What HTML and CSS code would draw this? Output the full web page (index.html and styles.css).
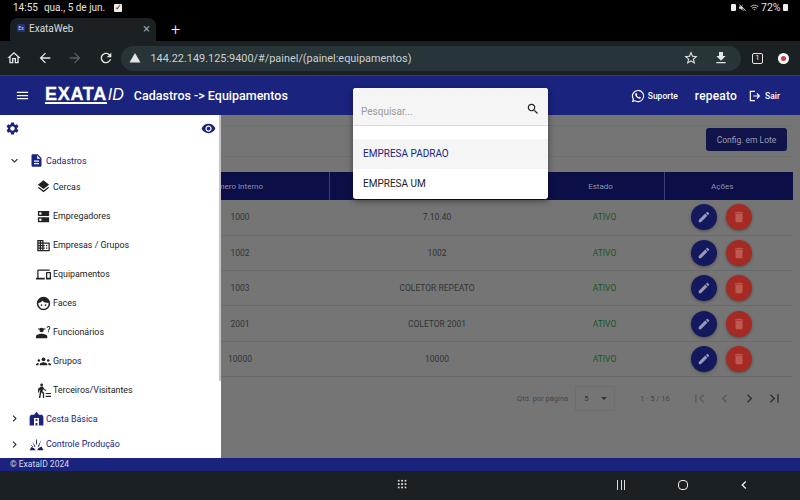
FILE: index.html
```html
<!DOCTYPE html>
<html lang="pt-BR">
<head>
    <meta charset="UTF-8">
    <title>ExataWeb</title>
    <link rel="stylesheet" href="styles.css">
</head>
<body>
    <svg class="sprite">
        <symbol id="i-menu" viewBox="0 0 24 24"><path d="M3 18h18v-2H3v2zm0-5h18v-2H3v2zm0-7v2h18V6H3z"/></symbol>
        <symbol id="i-gear" viewBox="0 0 24 24"><path d="M19.14 12.94c.04-.3.06-.61.06-.94 0-.32-.02-.64-.07-.94l2.03-1.58c.18-.14.23-.41.12-.61l-1.92-3.32c-.12-.22-.37-.29-.59-.22l-2.39.96c-.5-.38-1.03-.7-1.62-.94l-.36-2.54c-.04-.24-.24-.41-.48-.41h-3.84c-.24 0-.43.17-.47.41l-.36 2.54c-.59.24-1.13.57-1.62.94l-2.39-.96c-.22-.08-.47 0-.59.22L2.74 8.87c-.12.21-.08.47.12.61l2.03 1.58c-.05.3-.09.63-.09.94s.02.64.07.94l-2.03 1.58c-.18.14-.23.41-.12.61l1.92 3.32c.12.22.37.29.59.22l2.39-.96c.5.38 1.03.7 1.62.94l.36 2.54c.05.24.24.41.48.41h3.84c.24 0 .44-.17.47-.41l.36-2.54c.59-.24 1.13-.56 1.62-.94l2.39.96c.22.08.47 0 .59-.22l1.92-3.32c.12-.22.07-.47-.12-.61l-2.01-1.58zM12 15.6c-1.98 0-3.6-1.62-3.6-3.6s1.62-3.6 3.6-3.6 3.6 1.62 3.6 3.6-1.62 3.6-3.6 3.6z"/></symbol>
        <symbol id="i-eye" viewBox="0 0 24 24"><path d="M12 4.5C7 4.5 2.73 7.61 1 12c1.73 4.39 6 7.5 11 7.5s9.27-3.11 11-7.5c-1.73-4.39-6-7.5-11-7.5zM12 17c-2.76 0-5-2.24-5-5s2.24-5 5-5 5 2.24 5 5-2.24 5-5 5zm0-8c-1.66 0-3 1.34-3 3s1.34 3 3 3 3-1.34 3-3-1.34-3-3-3z"/></symbol>
        <symbol id="i-doc" viewBox="0 0 24 24"><path d="M14 2H6c-1.1 0-1.99.9-1.99 2L4 20c0 1.1.89 2 1.99 2H18c1.1 0 2-.9 2-2V8l-6-6zm2 16H8v-2h8v2zm0-4H8v-2h8v2zm-3-5V3.5L18.5 9H13z"/></symbol>
        <symbol id="i-layers" viewBox="0 0 24 24"><path d="M11.99 18.54l-7.37-5.73L3 14.07l9 7 9-7-1.63-1.27-7.38 5.74zM12 16l7.36-5.73L21 9l-9-7-9 7 1.63 1.27L12 16z"/></symbol>
        <symbol id="i-dns" viewBox="0 0 24 24"><path d="M20 13H4c-.55 0-1 .45-1 1v6c0 .55.45 1 1 1h16c.55 0 1-.45 1-1v-6c0-.55-.45-1-1-1zM7 19c-1.1 0-2-.9-2-2s.9-2 2-2 2 .9 2 2-.9 2-2 2zM20 3H4c-.55 0-1 .45-1 1v6c0 .55.45 1 1 1h16c.55 0 1-.45 1-1V4c0-.55-.45-1-1-1zM7 9c-1.1 0-2-.9-2-2s.9-2 2-2 2 .9 2 2-.9 2-2 2z"/></symbol>
        <symbol id="i-domain" viewBox="0 0 24 24"><path d="M12 7V3H2v18h20V7H12zM6 19H4v-2h2v2zm0-4H4v-2h2v2zm0-4H4V9h2v2zm0-4H4V5h2v2zm4 12H8v-2h2v2zm0-4H8v-2h2v2zm0-4H8V9h2v2zm0-4H8V5h2v2zm10 12h-8v-2h2v-2h-2v-2h2v-2h-2V9h8v10zm-2-8h-2v2h2v-2zm0 4h-2v2h2v-2z"/></symbol>
        <symbol id="i-devices" viewBox="0 0 24 24"><path d="M4 6h18V4H4c-1.1 0-2 .9-2 2v11H0v3h14v-3H4V6zm19 2h-6c-.55 0-1 .45-1 1v10c0 .55.45 1 1 1h6c.55 0 1-.45 1-1V9c0-.55-.45-1-1-1zm-1 9h-4v-7h4v7z"/></symbol>
        <symbol id="i-face" viewBox="0 0 24 24"><circle cx="12" cy="12" r="9.500" fill="none" stroke="currentColor" stroke-width="2.400"/><path d="M3 11c3.500 0 5.500-1.200 7-3.500 2 2.300 6 3.500 11 3.500-.5-5-4-8.500-9-8.500S3.500 6 3 11z"/><circle cx="8.800" cy="14.500" r="1.400"/><circle cx="15.200" cy="14.500" r="1.400"/></symbol>
        <symbol id="i-worker" viewBox="0 0 24 24"><circle cx="9" cy="8" r="3.500"/><path d="M3 5.500h12v1.500H3zM0 21v-3c0-2.500 5-4 9-4s9 1.500 9 4v3z"/><path d="M20 1.500a3 3 0 0 1 3 3c0 2-2 2.500-2.200 4.500h-1.500c0-2.500 2.200-3 2.200-4.500a1.500 1.500 0 0 0-3 0H17a3 3 0 0 1 3-3zM19.300 10h1.500v1.600h-1.500z"/></symbol>
        <symbol id="i-groups" viewBox="0 0 24 24"><circle cx="12" cy="8.500" r="3"/><circle cx="4.500" cy="10.500" r="2"/><circle cx="19.500" cy="10.500" r="2"/><path d="M6 18v-1.500c0-2 3-3.500 6-3.500s6 1.500 6 3.500V18zM0 18v-1.300c0-1.500 1.800-2.500 4.300-2.500-.2.500-.3 1.300-.3 2.300V18zM24 18v-1.300c0-1.500-1.800-2.500-4.300-2.500.2.500.3 1.300.3 2.300V18z"/></symbol>
        <symbol id="i-walker" viewBox="0 0 24 24"><circle cx="9" cy="3" r="2.200"/><path d="M7 6l4-.5 2.500 4.500 3 1-.5 1.600-3.800-1.300-1-1.700-.8 3.500 2.600 2.600V24h-2v-7l-2.500-2.300L6.800 24H4.600l2.200-13-1.600.8V15H3.200V9.500zM15.500 16H24v1.700h-8.500zM15.500 20.500H24v1.700h-8.500z"/></symbol>
        <symbol id="i-basket" viewBox="0 0 24 24"><path fill-rule="evenodd" d="M12 1L8 6H3L1 9v14h22V9l-2-3h-5zM8 11h8v12h-2.500v-4h-3v4H8zm2.500 2v3h3v-3z"/></symbol>
        <symbol id="i-burst" viewBox="0 0 24 24"><path d="M1 21l3-5 4 2 3 3zM23 21l-3-6-5 3-2 3zM5 7l5.500 8-1.500 1zM20 4l-6 11 1.700.7zM11 4h1.500l.5 8h-1.500zM2 12l5 3-.7 1.300z"/></symbol>
        <symbol id="i-down" viewBox="0 0 24 24"><path d="M16.590 8.590L12 13.170 7.410 8.590 6 10l6 6 6-6z"/></symbol>
        <symbol id="i-next" viewBox="0 0 24 24"><path d="M10 6L8.590 7.410 13.170 12l-4.580 4.590L10 18l6-6z"/></symbol>
        <symbol id="i-prev" viewBox="0 0 24 24"><path d="M15.410 7.410L14 6l-6 6 6 6 1.410-1.410L10.830 12z"/></symbol>
        <symbol id="i-first" viewBox="0 0 24 24"><path d="M18.410 16.590L13.820 12l4.590-4.590L17 6l-6 6 6 6zM6 6h2v12H6z"/></symbol>
        <symbol id="i-last" viewBox="0 0 24 24"><path d="M5.590 7.410L10.180 12l-4.590 4.590L7 18l6-6-6-6zM16 6h2v12h-2z"/></symbol>
        <symbol id="i-edit" viewBox="0 0 24 24"><path d="M3 17.250V21h3.750L17.810 9.940l-3.750-3.750L3 17.250zM20.710 7.040c.39-.39.39-1.020 0-1.410l-2.340-2.340c-.39-.39-1.020-.39-1.410 0l-1.830 1.830 3.750 3.750 1.830-1.830z"/></symbol>
        <symbol id="i-trash" viewBox="0 0 24 24"><path d="M6 19c0 1.100.9 2 2 2h8c1.100 0 2-.9 2-2V7H6v12zM19 4h-3.500l-1-1h-5l-1 1H5v2h14V4z"/></symbol>
        <symbol id="i-search" viewBox="0 0 24 24"><path d="M15.500 14h-.79l-.28-.27C15.410 12.590 16 11.110 16 9.500 16 5.910 13.090 3 9.500 3S3 5.910 3 9.500 5.910 16 9.500 16c1.610 0 3.090-.59 4.230-1.570l.27.28v.79l5 4.990L20.490 19l-4.990-5zm-6 0C7.010 14 5 11.990 5 9.500S7.010 5 9.500 5 14 7.010 14 9.500 11.990 14 9.500 14z"/></symbol>
        <symbol id="i-star" viewBox="0 0 24 24"><path d="M22 9.240l-7.190-.62L12 2 9.190 8.630 2 9.240l5.460 4.730L5.820 21 12 17.270 18.180 21l-1.630-7.030L22 9.240zM12 15.400l-3.760 2.270 1-4.280-3.320-2.880 4.380-.38L12 6.100l1.710 4.040 4.380.38-3.320 2.880 1 4.280L12 15.400z"/></symbol>
        <symbol id="i-download" viewBox="0 0 24 24"><path d="M19 9h-4V3H9v6H5l7 7 7-7zM5 18v2h14v-2H5z"/></symbol>
        <symbol id="i-home" viewBox="0 0 24 24"><path d="M12 5.690l5 4.500V18h-2v-6H9v6H7v-7.810l5-4.500M12 3L2 12h3v8h6v-6h2v6h6v-8h3L12 3z"/></symbol>
        <symbol id="i-back" viewBox="0 0 24 24"><path d="M20 11H7.830l5.590-5.590L12 4l-8 8 8 8 1.410-1.410L7.830 13H20v-2z"/></symbol>
        <symbol id="i-forward" viewBox="0 0 24 24"><path d="M12 4l-1.410 1.410L16.170 11H4v2h12.170l-5.580 5.590L12 20l8-8z"/></symbol>
        <symbol id="i-reload" viewBox="0 0 24 24"><path d="M17.650 6.350C16.200 4.900 14.210 4 12 4c-4.420 0-7.990 3.580-7.990 8s3.570 8 7.990 8c3.730 0 6.840-2.550 7.730-6h-2.080c-.82 2.330-3.040 4-5.650 4-3.310 0-6-2.690-6-6s2.690-6 6-6c1.660 0 3.140.69 4.220 1.780L13 11h7V4l-2.350 2.350z"/></symbol>
        <symbol id="i-warning" viewBox="0 0 24 24"><path d="M1 21h22L12 2z"/></symbol>
        <symbol id="i-whatsapp" viewBox="0 0 24 24"><path fill-rule="evenodd" d="M12 1.500A10.500 10.500 0 0 0 3 17.400L1.500 22.500l5.300-1.400A10.500 10.500 0 1 0 12 1.500zm0 2a8.500 8.500 0 1 1-4.600 15.600l-3 .8.800-2.900A8.500 8.500 0 0 1 12 3.500z"/><path d="M8.800 7c-.5 0-1.600.8-1.600 2.500 0 3 3.800 7.200 7.500 7.200 1.600 0 2.400-1.200 2.400-2 0-.4-2.200-1.500-2.600-1.500-.4 0-.8 1-1.200 1-1 0-3-2-3.300-3 0-.4.800-.9.800-1.300C10.800 9.500 9.600 7 8.800 7z"/></symbol>
        <symbol id="i-exit" viewBox="0 0 24 24"><path d="M3 3h9v2H5v14h7v2H3zM16 7l5 5-5 5-1.400-1.400 2.600-2.600H9v-2h8.200l-2.600-2.600z"/></symbol>
        <symbol id="i-wifi" viewBox="0 0 24 24"><path d="M1 9l2 2c4.970-4.970 13.030-4.970 18 0l2-2C16.930 2.930 7.080 2.930 1 9zm8 8l3 3 3-3c-1.650-1.660-4.340-1.660-6 0zm-4-4l2 2c2.760-2.760 7.240-2.760 10 0l2-2C15.140 9.140 8.870 9.140 5 13z"/></symbol>
        <symbol id="i-mute" viewBox="0 0 24 24"><path d="M4.270 3L3 4.270 7.730 9H3v6h4l5 5v-6.730l4.250 4.250c-.67.52-1.420.93-2.250 1.180v2.060c1.380-.31 2.630-.95 3.690-1.810L19.730 21 21 19.730l-9-9L4.270 3zM12 4L9.910 6.090 12 8.180V4z"/></symbol>
    </svg>

    <div class="status-bar">
        <span class="status-time">14:55</span>
        <span>qua., 5 de jun.</span>
        <span class="status-check">&#10003;</span>
        <span class="status-right">
            <span class="status-dot"></span>
            <svg class="icon status-icon"><use href="#i-mute"/></svg>
            <svg class="icon status-icon status-wifi"><use href="#i-wifi"/></svg>
            <span>72%</span>
            <span class="status-dot"></span>
        </span>
    </div>

    <div class="tab-strip">
        <div class="tab">
            <span class="favicon">Ex</span>
            <span class="tab-title">ExataWeb</span>
            <span class="tab-close">&times;</span>
        </div>
        <span class="tab-new">+</span>
    </div>

    <div class="toolbar">
        <span class="tool"><svg class="icon"><use href="#i-home"/></svg></span>
        <span class="tool"><svg class="icon"><use href="#i-back"/></svg></span>
        <span class="tool tool-off"><svg class="icon"><use href="#i-forward"/></svg></span>
        <span class="tool"><svg class="icon"><use href="#i-reload"/></svg></span>
        <div class="url-bar">
            <svg class="icon url-warning"><use href="#i-warning"/></svg>
            <span class="url-text">144.22.149.125:9400/#/painel/(painel:equipamentos)</span>
            <svg class="icon url-star"><use href="#i-star"/></svg>
            <svg class="icon url-download"><use href="#i-download"/></svg>
        </div>
        <span class="tab-count">1</span>
        <span class="profile"><span class="profile-dot"></span></span>
    </div>

    <header class="app-header">
        <svg class="icon header-menu"><use href="#i-menu"/></svg>
        <span class="logo"><span class="logo-main">EXATA</span><span class="logo-id">ID</span></span>
        <span class="header-title">Cadastros -&gt; Equipamentos</span>
        <span class="header-right">
            <svg class="icon header-icon"><use href="#i-whatsapp"/></svg>
            <span class="header-link">Suporte</span>
            <span class="header-user">repeato</span>
            <svg class="icon header-icon"><use href="#i-exit"/></svg>
            <span class="header-link">Sair</span>
        </span>
    </header>

    <main class="workspace">
        <div class="content">
            <div class="content-bar">
                <button class="lote-btn">Config. em Lote</button>
            </div>
            <table class="grid">
                <thead>
                    <tr>
                        <th class="col-num">Número Interno</th>
                        <th class="col-name">Nome</th>
                        <th class="col-state">Estado</th>
                        <th class="col-actions">Ações</th>
                    </tr>
                </thead>
                <tbody>
                    <tr>
                        <td class="cell-num">1000</td><td>7.10.40</td><td class="cell-state">ATIVO</td>
                        <td class="cell-actions"><span class="round round-blue"><svg class="icon"><use href="#i-edit"/></svg></span><span class="round round-red"><svg class="icon"><use href="#i-trash"/></svg></span></td>
                    </tr>
                    <tr>
                        <td class="cell-num">1002</td><td>1002</td><td class="cell-state">ATIVO</td>
                        <td class="cell-actions"><span class="round round-blue"><svg class="icon"><use href="#i-edit"/></svg></span><span class="round round-red"><svg class="icon"><use href="#i-trash"/></svg></span></td>
                    </tr>
                    <tr>
                        <td class="cell-num">1003</td><td>COLETOR REPEATO</td><td class="cell-state">ATIVO</td>
                        <td class="cell-actions"><span class="round round-blue"><svg class="icon"><use href="#i-edit"/></svg></span><span class="round round-red"><svg class="icon"><use href="#i-trash"/></svg></span></td>
                    </tr>
                    <tr>
                        <td class="cell-num">2001</td><td>COLETOR 2001</td><td class="cell-state">ATIVO</td>
                        <td class="cell-actions"><span class="round round-blue"><svg class="icon"><use href="#i-edit"/></svg></span><span class="round round-red"><svg class="icon"><use href="#i-trash"/></svg></span></td>
                    </tr>
                    <tr>
                        <td class="cell-num">10000</td><td>10000</td><td class="cell-state">ATIVO</td>
                        <td class="cell-actions"><span class="round round-blue"><svg class="icon"><use href="#i-edit"/></svg></span><span class="round round-red"><svg class="icon"><use href="#i-trash"/></svg></span></td>
                    </tr>
                </tbody>
            </table>
            <div class="pager">
                <span>Qtd. por página</span>
                <span class="pager-select"><span>5</span><span class="pager-caret"></span></span>
                <span class="pager-range">1 - 5 / 16</span>
                <svg class="icon pager-icon pager-off"><use href="#i-first"/></svg>
                <svg class="icon pager-icon pager-off"><use href="#i-prev"/></svg>
                <svg class="icon pager-icon"><use href="#i-next"/></svg>
                <svg class="icon pager-icon"><use href="#i-last"/></svg>
            </div>
        </div>

        <aside class="drawer">
            <div class="drawer-top">
                <svg class="icon drawer-gear"><use href="#i-gear"/></svg>
                <svg class="icon drawer-eye"><use href="#i-eye"/></svg>
            </div>
            <div class="group">
                <svg class="icon group-chev"><use href="#i-down"/></svg>
                <svg class="icon group-icon"><use href="#i-doc"/></svg>
                <span>Cadastros</span>
            </div>
            <div class="item item-first"><svg class="icon item-icon"><use href="#i-layers"/></svg><span>Cercas</span></div>
            <div class="item"><svg class="icon item-icon"><use href="#i-dns"/></svg><span>Empregadores</span></div>
            <div class="item"><svg class="icon item-icon"><use href="#i-domain"/></svg><span>Empresas / Grupos</span></div>
            <div class="item"><svg class="icon item-icon"><use href="#i-devices"/></svg><span>Equipamentos</span></div>
            <div class="item"><svg class="icon item-icon"><use href="#i-face"/></svg><span>Faces</span></div>
            <div class="item"><svg class="icon item-icon"><use href="#i-worker"/></svg><span>Funcionários</span></div>
            <div class="item"><svg class="icon item-icon"><use href="#i-groups"/></svg><span>Grupos</span></div>
            <div class="item"><svg class="icon item-icon"><use href="#i-walker"/></svg><span>Terceiros/Visitantes</span></div>
            <div class="group group-cesta">
                <svg class="icon group-chev"><use href="#i-next"/></svg>
                <svg class="icon group-icon"><use href="#i-basket"/></svg>
                <span>Cesta Básica</span>
            </div>
            <div class="group group-prod">
                <svg class="icon group-chev"><use href="#i-next"/></svg>
                <svg class="icon group-icon group-icon-dark"><use href="#i-burst"/></svg>
                <span>Controle Produção</span>
            </div>
            <span class="drawer-thumb"></span>
        </aside>
    </main>

    <div class="popup">
        <div class="popup-search">
            <span class="popup-hint">Pesquisar...</span>
            <svg class="icon popup-icon"><use href="#i-search"/></svg>
        </div>
        <div class="popup-item popup-item-on">EMPRESA PADRAO</div>
        <div class="popup-item">EMPRESA UM</div>
    </div>

    <footer class="app-footer">© ExataID 2024</footer>

    <div class="nav-bar">
        <span class="nav-grid"></span>
        <span class="nav-recent"><i></i><i></i><i></i></span>
        <span class="nav-home"></span>
        <svg class="icon nav-back"><use href="#i-prev"/></svg>
    </div>
</body>
</html>
```

FILE: styles.css
```css
* {
    box-sizing: border-box;
}

html, body {
    margin: 0;
    height: 500px;
    overflow: hidden;
}

body {
    position: relative;
    display: flex;
    flex-direction: column;
    width: 800px;
    background-color: #000;
    font-family: Roboto, "Liberation Sans", sans-serif;
    color: #fff;
}

.sprite {
    display: none;
}

.icon {
    display: block;
    width: 16px;
    height: 16px;
    fill: currentColor;
    flex: none;
}

/* android status bar */
.status-bar {
    display: flex;
    align-items: center;
    height: 18px;
    padding: 0 12px 3px 13px;
    font-size: 10px;
    color: #e4e4e4;
}

.status-time {
    margin-right: 6px;
}

.status-check {
    width: 8px;
    height: 8px;
    margin-left: 9px;
    background-color: #eee;
    border-radius: 1px;
    color: #000;
    font-size: 8px;
    line-height: 8px;
    text-align: center;
}

.status-right {
    display: flex;
    align-items: center;
    gap: 2.500px;
    margin-left: auto;
    font-size: 10.5px;
}

.status-dot {
    width: 5px;
    height: 7px;
    background-color: #eee;
    border-radius: 1px;
}

.status-icon {
    width: 9px;
    height: 9px;
}

.status-wifi {
    color: #aaa;
}

/* chrome */
.tab-strip {
    display: flex;
    align-items: flex-end;
    height: 23px;
}

.tab {
    display: flex;
    align-items: center;
    width: 146px;
    height: 23px;
    margin-left: 10px;
    padding: 0 6px 3px 7px;
    background-color: #1b2024;
    border-radius: 8px 8px 0 0;
    font-size: 10px;
    color: #d8dcdf;
}

.favicon {
    width: 8px;
    height: 8px;
    margin-right: 4px;
    background-color: #24307c;
    border-radius: 1px;
    font-size: 5px;
    line-height: 8px;
    text-align: center;
}

.tab-close {
    margin-left: auto;
    font-size: 13px;
    color: #9aa0a3;
}

.tab-new {
    margin: 0 0 2px 15px;
    font-size: 16px;
    font-weight: 300;
}

.toolbar {
    display: flex;
    align-items: center;
    gap: 10.5px;
    height: 35px;
    padding-left: 4px;
    background-color: #1b2024;
    border-bottom: 1px solid #39404a;
}

.tool {
    display: flex;
    justify-content: center;
    width: 20px;
    color: #e3e6e8;
}

.tool-off {
    color: #596064;
}

.url-bar {
    display: flex;
    align-items: center;
    width: 620px;
    height: 25px;
    margin-left: -5.5px;
    padding-left: 8px;
    background-color: #283538;
    border-radius: 13px;
}

.url-warning {
    width: 12px;
    height: 12px;
    color: #e3e6e8;
}

.url-text {
    margin-left: 10px;
    font-size: 10.9px;
    color: #c9d1d4;
}

.url-star {
    margin-left: auto;
    margin-right: 1px;
    color: #e3e6e8;
}

.url-download {
    margin: 0 12px 0 13px;
    color: #e3e6e8;
}

.tab-count {
    width: 11px;
    height: 11px;
    margin-left: 1px;
    border: 1px solid #e3e6e8;
    border-radius: 2px;
    font-size: 7px;
    line-height: 9px;
    text-align: center;
}

.profile {
    display: flex;
    align-items: center;
    justify-content: center;
    width: 11px;
    height: 11px;
    margin-left: 4px;
    background-color: #fff;
    border-radius: 50%;
}

.profile-dot {
    width: 5px;
    height: 5px;
    background-color: #d03a3a;
    border-radius: 50%;
}

/* app header */
.app-header {
    display: flex;
    align-items: center;
    height: 39px;
    padding-left: 15px;
    background-color: #1a237e;
}

.header-menu {
    width: 15px;
    height: 15px;
}

.logo {
    display: flex;
    align-items: baseline;
    margin-left: 15px;
    font-family: "Liberation Sans", sans-serif;
    font-size: 18px;
    line-height: 15px;
    font-weight: 700;
}

.logo-main {
    border-bottom: 2px solid #fff;
    letter-spacing: 0.7px;
    -webkit-text-stroke: 0.3px #fff;
}

.logo-id {
    margin-left: 1px;
    font-size: 16px;
    font-style: italic;
    font-weight: 400;
}

.header-title {
    margin-left: 10px;
    font-size: 12.5px;
    font-weight: 500;
}

.header-right {
    display: flex;
    align-items: center;
    margin-left: auto;
    padding-right: 20px;
}

.header-icon {
    width: 14px;
    height: 14px;
}

.header-link {
    margin-left: 3px;
    font-size: 8.5px;
    font-weight: 500;
}

.header-user {
    margin: 0 11px 0 17px;
    font-size: 12px;
    font-weight: 500;
    letter-spacing: 0.2px;
}

/* dimmed page behind the drawer and popup */
.workspace {
    position: relative;
    display: flex;
    flex: 1;
    min-height: 0;
    overflow: hidden;
}

.content {
    flex: 1;
    min-width: 0;
    padding-top: 10px;
    padding-left: 151px;
    padding-right: 7px;
    background-color: #757575;
    font-size: 8.5px;
    color: #333;
}

.content-bar {
    display: flex;
    justify-content: flex-end;
    align-items: flex-start;
    height: 32px;
    margin-bottom: 15px;
    padding: 2px 6px 0 0;
    border-top: 1px solid #6f6f6f;
    border-bottom: 1px solid #6f6f6f;
}

.lote-btn {
    width: 81px;
    height: 23px;
    padding: 0;
    background-color: #10144a;
    border: 0;
    border-radius: 3px;
    font: inherit;
    color: #9a9cb5;
}

.grid {
    width: 642px;
    border-collapse: collapse;
    table-layout: fixed;
    text-align: center;
}

.col-num {
    width: 178px;
    padding-right: 10px;
}

.col-name {
    width: 216px;
}

.col-state {
    width: 119px;
    padding-right: 9px;
}

.col-actions {
    padding-right: 14px;
}

.grid th {
    height: 28px;
    background-color: #0c0f47;
    border-right: 1px solid #3c4078;
    font-size: 8px;
    font-weight: 400;
    color: #8f91ad;
}

.grid th:last-child {
    border-right: 0;
}

.grid td {
    height: 35.300px;
    padding: 0;
    border-bottom: 1px solid #6a6a6a;
}

.grid .cell-actions {
    padding-right: 14px;
}

.cell-state {
    color: #1b551b;
}

.round {
    display: inline-flex;
    align-items: center;
    justify-content: center;
    width: 26px;
    height: 26px;
    margin: 0 4.500px;
    border-radius: 50%;
    box-shadow: 0 1px 3px rgba(0, 0, 0, 0.35);
    vertical-align: middle;
}

.round .icon {
    width: 14px;
    height: 14px;
}

.round-blue {
    background-color: #14185c;
    color: #9699b9;
}

.round-red {
    background-color: #a52a24;
    color: #be5a50;
}

.pager {
    display: flex;
    align-items: center;
    height: 44px;
    padding-left: 366px;
    font-size: 7.5px;
    color: #464646;
    white-space: nowrap;
}

.pager-select {
    display: flex;
    align-items: center;
    justify-content: space-between;
    width: 40px;
    height: 25px;
    margin-left: 7px;
    padding: 0 7px 0 8px;
    border: 1px solid #6e6e6e;
    color: #333;
}

.pager-caret {
    border-top: 3px solid #333;
    border-left: 3px solid transparent;
    border-right: 3px solid transparent;
}

.pager-range {
    width: 29px;
    margin: 0 22px 0 25px;
}

.pager-icon {
    width: 17px;
    height: 17px;
    margin-right: 8px;
    color: #333;
}

.pager-off {
    color: #5c5c5c;
}

/* side drawer */
.drawer {
    position: absolute;
    top: 0;
    left: 0;
    bottom: 0;
    width: 221px;
    background-color: #fff;
    overflow: hidden;
    font-size: 8.900px;
    color: #222;
}

.drawer-thumb {
    position: absolute;
    top: 0;
    right: 0;
    width: 2px;
    height: 266px;
    background-color: #c4c4c4;
}

.drawer-top {
    display: flex;
    justify-content: space-between;
    align-items: center;
    height: 26px;
    padding: 0 5px;
    color: #1a237e;
}

.drawer-gear {
    width: 15px;
    height: 15px;
}

.drawer-eye {
    width: 15px;
    height: 15px;
}

.group {
    display: flex;
    align-items: center;
    height: 29px;
    margin-top: 5px;
    padding-left: 8px;
    color: #1a237e;
}

.group-chev {
    width: 13px;
    height: 13px;
    color: #222;
}

.group-icon {
    width: 15px;
    height: 15px;
    margin: 0 2px 0 8px;
}

.group-icon-dark {
    color: #14185c;
}

.group-cesta {
    margin-top: 0;
    height: 28px;
}

.group-prod {
    margin-top: 0;
    height: 23px;
}

.item {
    display: flex;
    align-items: center;
    height: 29px;
    padding-left: 36px;
}

.item-first {
    height: 23px;
    margin-bottom: 3.5px;
}

.item-icon {
    width: 15px;
    height: 15px;
    margin-right: 2px;
}

/* company picker */
.popup {
    position: absolute;
    top: 88px;
    left: 353px;
    width: 195px;
    height: 111px;
    background-color: #fff;
    border-radius: 3px;
    box-shadow: 0 2px 6px rgba(0, 0, 0, 0.45);
    overflow: hidden;
    font-size: 10px;
    color: #222;
}

.popup-search {
    display: flex;
    align-items: center;
    justify-content: space-between;
    height: 38px;
    margin-bottom: 13px;
    padding: 10px 8px 0 8px;
    background-color: #f5f5f5;
    border-bottom: 1px solid #ddd;
}

.popup-hint {
    font-size: 10px;
    color: #9a9a9a;
}

.popup-icon {
    width: 14px;
    height: 14px;
    margin-bottom: 5px;
    color: #222;
}

.popup-item {
    display: flex;
    align-items: center;
    height: 30px;
    padding: 0 0 2px 10px;
}

.popup-item-on {
    background-color: #f5f5f5;
    color: #1a237e;
}

/* footer */
.app-footer {
    height: 13px;
    padding-left: 10px;
    background-color: #1a237e;
    font-size: 8.500px;
    line-height: 12px;
    color: #d6d8ea;
}

.nav-bar {
    position: relative;
    height: 29px;
    background-color: #1b2024;
}

.nav-grid {
    position: absolute;
    top: 8px;
    left: 397px;
    width: 10px;
    height: 10px;
    background-image: radial-gradient(circle, #ddd 1px, transparent 1.200px);
    background-size: 3.400px 3.400px;
}

.nav-recent {
    position: absolute;
    top: 9px;
    left: 617px;
    display: flex;
    gap: 2.500px;
}

.nav-recent i {
    width: 1px;
    height: 10px;
    background-color: #ddd;
}

.nav-home {
    position: absolute;
    top: 9px;
    left: 678px;
    width: 10px;
    height: 10px;
    border: 1.500px solid #eee;
    border-radius: 4px;
}

.nav-back {
    position: absolute;
    top: 6px;
    left: 736px;
    color: #eee;
}
```
